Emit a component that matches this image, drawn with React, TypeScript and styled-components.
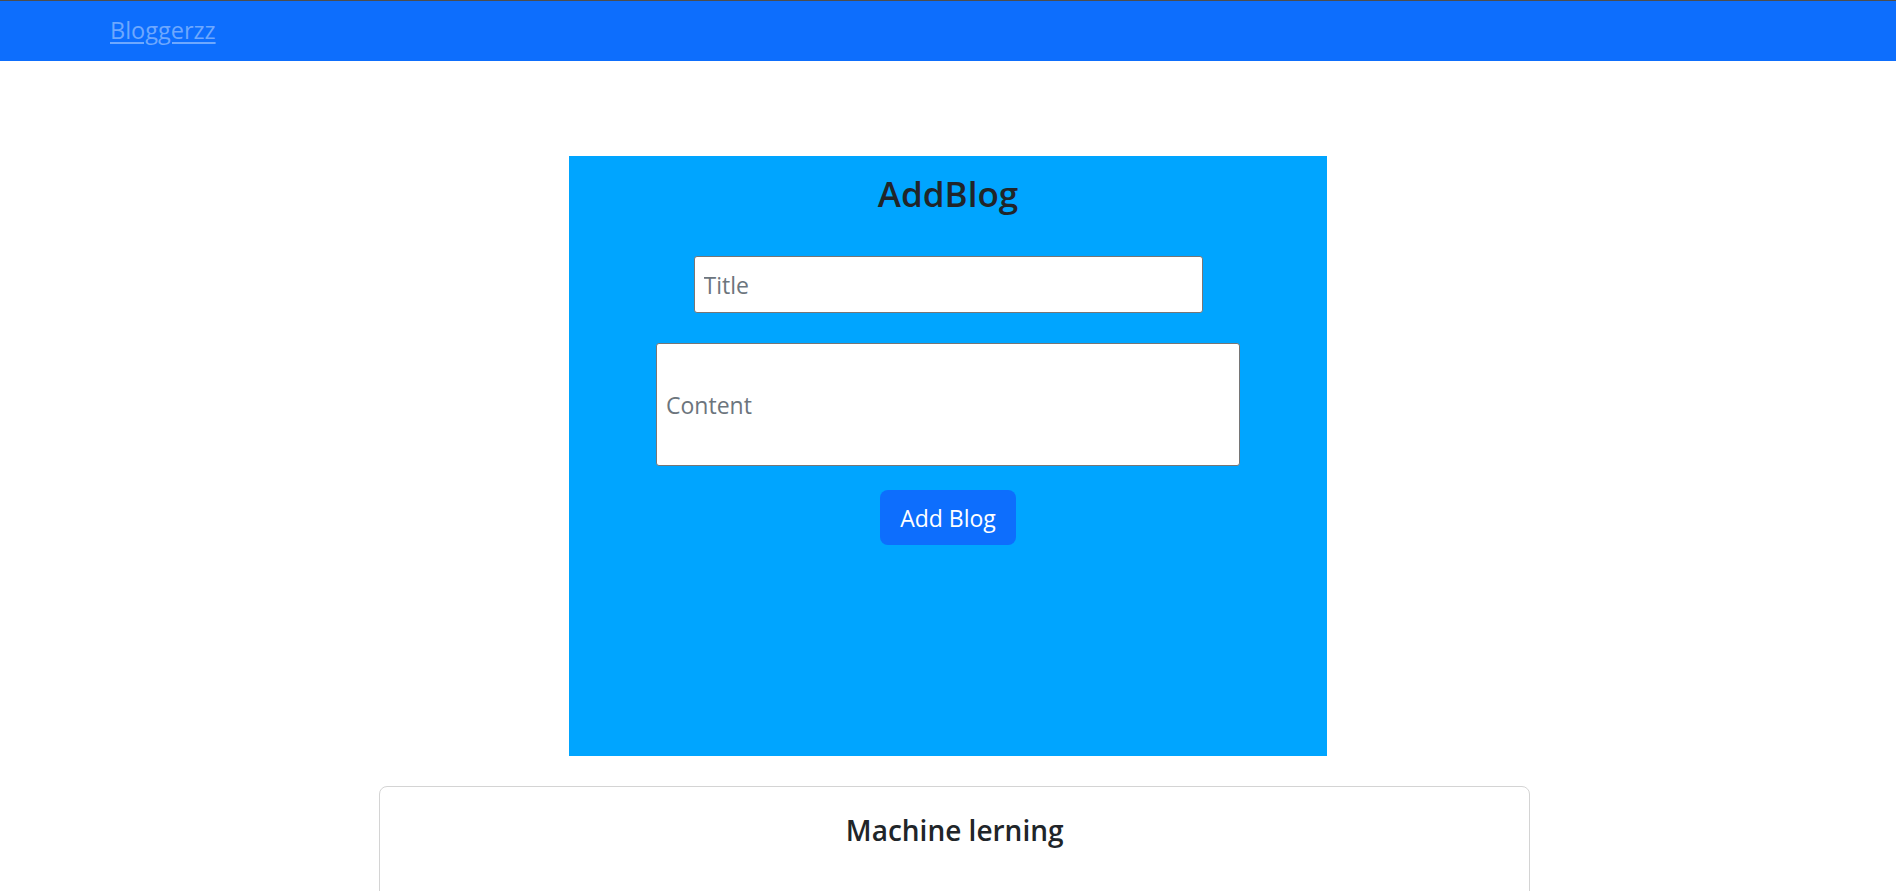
import { useState } from "react";
import styled, { createGlobalStyle } from "styled-components";

const GlobalStyle = createGlobalStyle`
  html {
    overflow: hidden;
  }
  body {
    margin: 0;
    background: #fff;
    font-family: "Open Sans", "Noto Sans", sans-serif;
    color: #212529;
  }
  * {
    box-sizing: border-box;
  }
`;

const Navbar = styled.nav`
  display: flex;
  align-items: center;
  height: 61px;
  padding-left: 110px;
  background: #0d6efd;
  border-top: 1px solid #4d4d4d;
`;

const Brand = styled.a`
  font-size: 23.5px;
  line-height: 1.5;
  color: #6ea8fe;
  text-decoration: underline;
  text-underline-offset: 3px;
  cursor: pointer;
`;

const Page = styled.main`
  display: flex;
  flex-direction: column;
  padding-top: 95px;
`;

const AddPanel = styled.section`
  display: flex;
  flex-direction: column;
  align-items: center;
  width: 758px;
  height: 600px;
  margin: 0 auto;
  padding-top: 17px;
  background: #00a5ff;
`;

const PanelTitle = styled.h2`
  margin: 0 0 41px;
  font-size: 35px;
  font-weight: 600;
  line-height: 1.2;
  color: #212529;
`;

const FieldInput = styled.input<{ $width: number; $height: number }>`
  width: ${(p) => p.$width}px;
  height: ${(p) => p.$height}px;
  margin-bottom: ${(p) => (p.$height > 60 ? 24 : 30)}px;
  padding: 0 9px;
  border: 1px solid #767676;
  border-radius: 3px;
  background: #fff;
  font-family: "Open Sans", "Noto Sans", sans-serif;
  font-size: 23px;
  color: #212529;
  outline: none;

  &::placeholder {
    color: #6c757d;
  }
`;

const SubmitButton = styled.button`
  height: 55px;
  padding: 0 20px;
  border: none;
  border-radius: 8px;
  background: #0d6efd;
  color: #fff;
  font-family: "Open Sans", "Noto Sans", sans-serif;
  font-size: 23px;
  cursor: pointer;
`;

const BlogCard = styled.article`
  width: 1151px;
  margin: 30px 0 0 20%;
  padding: 27px 16px 120px;
  border: 1px solid #d4d4d4;
  border-radius: 8px;
  text-align: center;
`;

const BlogTitle = styled.h4`
  margin: 0;
  font-size: 28px;
  font-weight: 600;
  line-height: 1.2;
`;

export default function App() {
  const [title, setTitle] = useState("");
  const [content, setContent] = useState("");
  const [blogs, setBlogs] = useState([{ title: "Machine lerning" }]);

  const handleSubmit = () => {
    if (!title) return;
    setBlogs([{ title }, ...blogs]);
    setTitle("");
    setContent("");
  };

  return (
    <>
      <GlobalStyle />
      <Navbar>
        <Brand>Bloggerzz</Brand>
      </Navbar>
      <Page>
        <AddPanel>
          <PanelTitle>AddBlog</PanelTitle>
          <FieldInput
            $width={509}
            $height={57}
            placeholder="Title"
            value={title}
            onChange={(e) => setTitle(e.target.value)}
          />
          <FieldInput
            $width={584}
            $height={123}
            placeholder="Content"
            value={content}
            onChange={(e) => setContent(e.target.value)}
          />
          <SubmitButton onClick={handleSubmit}>Add Blog</SubmitButton>
        </AddPanel>
        {blogs.map((blog, i) => (
          <BlogCard key={i}>
            <BlogTitle>{blog.title}</BlogTitle>
          </BlogCard>
        ))}
      </Page>
    </>
  );
}
